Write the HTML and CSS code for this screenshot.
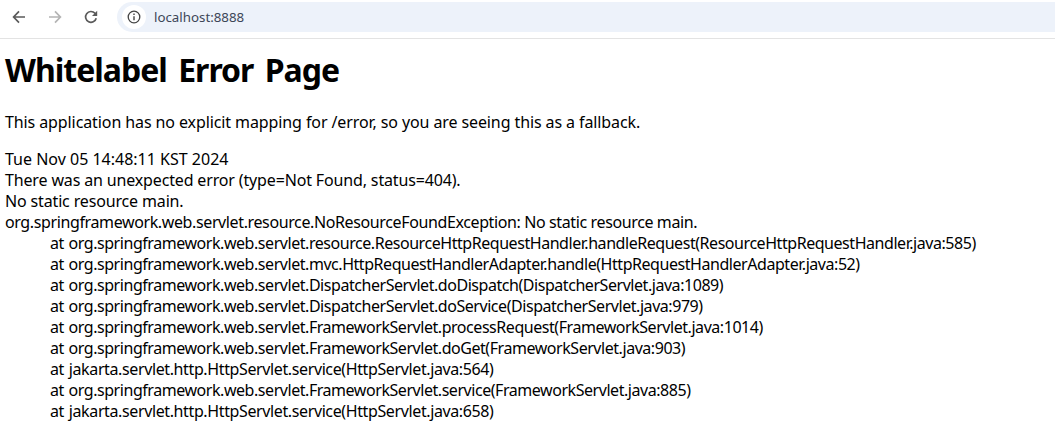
FILE: index.html
```html
<!DOCTYPE html>
<html lang="en">
<head>
<meta charset="utf-8">
<title>Whitelabel Error Page</title>
<link rel="stylesheet" href="styles.css">
</head>
<body>
<header class="toolbar">
  <svg class="nav-icon" viewBox="0 0 16 16" aria-hidden="true"><path class="stroke" d="M14 8H3M8 2.4 2.6 8 8 13.6"/></svg>
  <svg class="nav-icon dim" viewBox="0 0 16 16" aria-hidden="true"><path class="stroke" d="M2 8h11M8 2.4 13.4 8 8 13.6"/></svg>
  <svg class="nav-icon" viewBox="0 0 16 16" aria-hidden="true"><path class="stroke" d="M13.2 9.2A5.4 5.4 0 1 1 12 4.3L13.6 6"/><path class="fill" d="M14.2 1.8v5.2H9z"/></svg>
  <div class="omnibox">
    <span class="info-chip">
      <svg class="info-icon" viewBox="0 0 14 14" aria-hidden="true"><circle class="stroke" cx="7" cy="7" r="5.8"/><path class="fill" d="M6.3 6.2h1.4v4H6.3zM6.3 3.6h1.4V5H6.3z"/></svg>
    </span>
    <span class="url">localhost:8888</span>
  </div>
</header>
<main class="page">
  <h1 class="title">Whitelabel Error Page</h1>
  <p class="lead">This application has no explicit mapping for /error, so you are seeing this as a fallback.</p>
  <div class="details">
    <div>Tue Nov 05 14:48:11 KST 2024</div>
    <div class="message">There was an unexpected error (type=Not Found, status=404).</div>
    <div class="message">No static resource main.</div>
    <div class="exception">org.springframework.web.servlet.resource.NoResourceFoundException: No static resource main.</div>
    <div class="frame">at org.springframework.web.servlet.resource.ResourceHttpRequestHandler.handleRequest(ResourceHttpRequestHandler.java:585)</div>
    <div class="frame">at org.springframework.web.servlet.mvc.HttpRequestHandlerAdapter.handle(HttpRequestHandlerAdapter.java:52)</div>
    <div class="frame">at org.springframework.web.servlet.DispatcherServlet.doDispatch(DispatcherServlet.java:1089)</div>
    <div class="frame">at org.springframework.web.servlet.DispatcherServlet.doService(DispatcherServlet.java:979)</div>
    <div class="frame">at org.springframework.web.servlet.FrameworkServlet.processRequest(FrameworkServlet.java:1014)</div>
    <div class="frame">at org.springframework.web.servlet.FrameworkServlet.doGet(FrameworkServlet.java:903)</div>
    <div class="frame short">at jakarta.servlet.http.HttpServlet.service(HttpServlet.java:564)</div>
    <div class="frame">at org.springframework.web.servlet.FrameworkServlet.service(FrameworkServlet.java:885)</div>
    <div class="frame short">at jakarta.servlet.http.HttpServlet.service(HttpServlet.java:658)</div>
  </div>
</main>
</body>
</html>
```
FILE: styles.css
```css
html, body {
  margin: 0;
  padding: 0;
  height: 423px;
  overflow: hidden;
  background: #fff;
  color: #000;
  font-family: "Noto Sans", sans-serif;
}
.toolbar {
  display: flex;
  align-items: center;
  height: 34px;
  padding: 0 0 4px 11px;
  border-bottom: 1px solid #e3e3e3;
}
.nav-icon {
  width: 16px;
  height: 16px;
  margin-right: 20px;
  color: #5a5a5a;
  flex: none;
}
.nav-icon.dim { color: #b4b4b4; }
.stroke {
  fill: none;
  stroke: currentColor;
  stroke-width: 1.7;
}
.fill { fill: currentColor; }
.omnibox {
  display: flex;
  align-items: center;
  flex: 1;
  height: 30px;
  margin-left: -2px;
  border-radius: 15px 0 0 15px;
  background: #edf2fa;
  padding-left: 5px;
}
.info-chip {
  display: flex;
  align-items: center;
  justify-content: center;
  width: 24px;
  height: 24px;
  border-radius: 50%;
  background: #fff;
  color: #444;
}
.info-icon { width: 14px; height: 14px; }
.info-icon .stroke { stroke-width: 1.3; }
.url {
  margin-left: 8px;
  font-size: 13.3px;
  color: #3c4657;
}
.page { padding: 0 5px; }
.title {
  margin: 7px 0 16px;
  font-size: 32px;
  line-height: 48px;
  font-weight: 700;
  letter-spacing: -1px;
  word-spacing: 4px;
}
.lead {
  margin: 0 0 15px;
  font-size: 16px;
  line-height: 24px;
  letter-spacing: -0.1px;
}
.details {
  font-size: 16px;
  line-height: 21px;
  white-space: nowrap;
}
.message { letter-spacing: -0.15px; }
.exception { letter-spacing: -0.38px; }
.frame {
  padding-left: 45px;
  letter-spacing: -0.45px;
  word-spacing: 1px;
}
.frame.short { letter-spacing: -0.38px; }
```
